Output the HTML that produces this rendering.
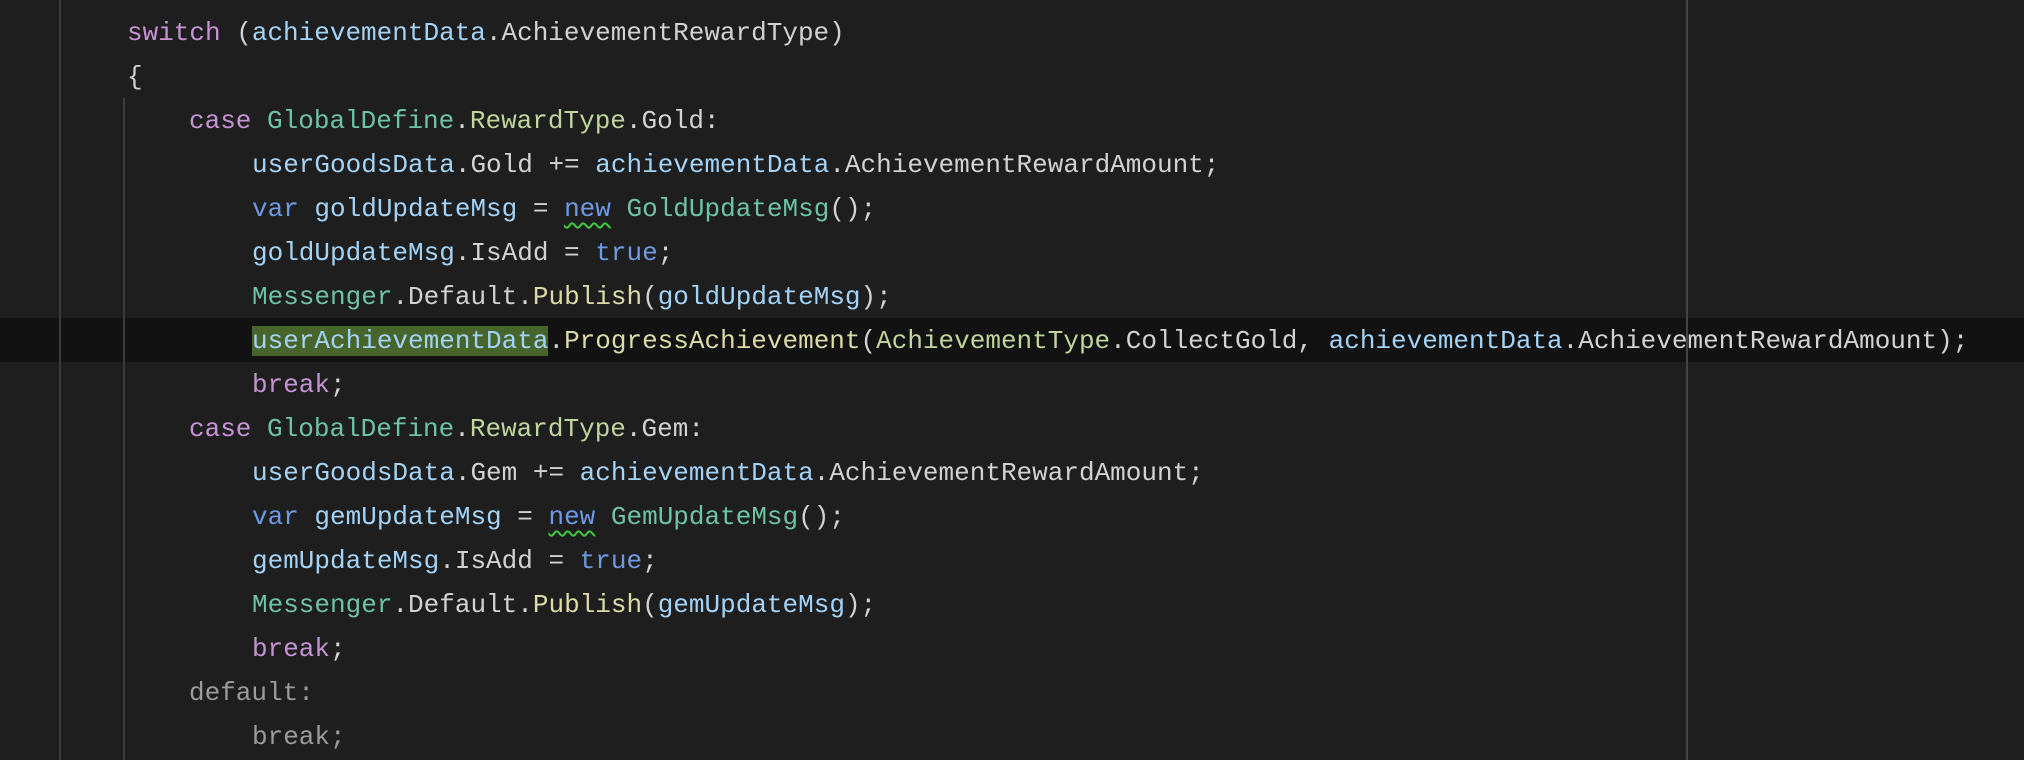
<!DOCTYPE html>
<html><head><meta charset="utf-8"><style>
html,body{margin:0;padding:0;background:#1e1e1e;width:2024px;height:760px;overflow:hidden}
.ed{position:relative;width:2024px;height:760px;font-family:"Liberation Mono",monospace;font-size:26px;color:#d2d2d2}
.l{position:absolute;left:0;width:2024px;height:44px;line-height:44px;white-space:pre}
.hl{background:#121212}
.k{color:#c792d6}.b{color:#6d9ae6}.v{color:#a3d3f7}.t{color:#6cc4a4}.e{color:#bfd59b}.m{color:#dcdba8}.g{color:#9b9b9b}
.sel{background:#47652a}
.sq{text-decoration:underline wavy #3ec93e;text-decoration-thickness:1.5px;text-underline-offset:6px}
.gd{position:absolute;width:2px;background:#3c3c3c}
</style></head><body><div class="ed">
<div class="l hl" style="top:318px"></div>
<div class="gd" style="left:59px;top:0;height:760px"></div>
<div class="gd" style="left:123px;top:98px;height:662px"></div>
<div class="gd" style="left:1686px;top:0;height:760px;background:#444"></div>
<div class="l" style="top:11px;padding-left:127px"><span class="k">switch</span> (<span class="v">achievementData</span>.AchievementRewardType)</div>
<div class="l" style="top:55px;padding-left:127px">{</div>
<div class="l" style="top:99px;padding-left:189px"><span class="k">case</span> <span class="t">GlobalDefine</span>.<span class="e">RewardType</span>.Gold:</div>
<div class="l" style="top:143px;padding-left:252px"><span class="v">userGoodsData</span>.Gold += <span class="v">achievementData</span>.AchievementRewardAmount;</div>
<div class="l" style="top:187px;padding-left:252px"><span class="b">var</span> <span class="v">goldUpdateMsg</span> = <span class="b sq">new</span> <span class="t">GoldUpdateMsg</span>();</div>
<div class="l" style="top:231px;padding-left:252px"><span class="v">goldUpdateMsg</span>.IsAdd = <span class="b">true</span>;</div>
<div class="l" style="top:275px;padding-left:252px"><span class="t">Messenger</span>.Default.<span class="m">Publish</span>(<span class="v">goldUpdateMsg</span>);</div>
<div class="l" style="top:319px;padding-left:252px"><span class="v sel">userAchievementData</span>.<span class="m">ProgressAchievement</span>(<span class="e">AchievementType</span>.CollectGold, <span class="v">achievementData</span>.AchievementRewardAmount);</div>
<div class="l" style="top:363px;padding-left:252px"><span class="k">break</span>;</div>
<div class="l" style="top:407px;padding-left:189px"><span class="k">case</span> <span class="t">GlobalDefine</span>.<span class="e">RewardType</span>.Gem:</div>
<div class="l" style="top:451px;padding-left:252px"><span class="v">userGoodsData</span>.Gem += <span class="v">achievementData</span>.AchievementRewardAmount;</div>
<div class="l" style="top:495px;padding-left:252px"><span class="b">var</span> <span class="v">gemUpdateMsg</span> = <span class="b sq">new</span> <span class="t">GemUpdateMsg</span>();</div>
<div class="l" style="top:539px;padding-left:252px"><span class="v">gemUpdateMsg</span>.IsAdd = <span class="b">true</span>;</div>
<div class="l" style="top:583px;padding-left:252px"><span class="t">Messenger</span>.Default.<span class="m">Publish</span>(<span class="v">gemUpdateMsg</span>);</div>
<div class="l" style="top:627px;padding-left:252px"><span class="k">break</span>;</div>
<div class="l g" style="top:671px;padding-left:189px">default:</div>
<div class="l g" style="top:715px;padding-left:252px">break;</div>
</div></body></html>
